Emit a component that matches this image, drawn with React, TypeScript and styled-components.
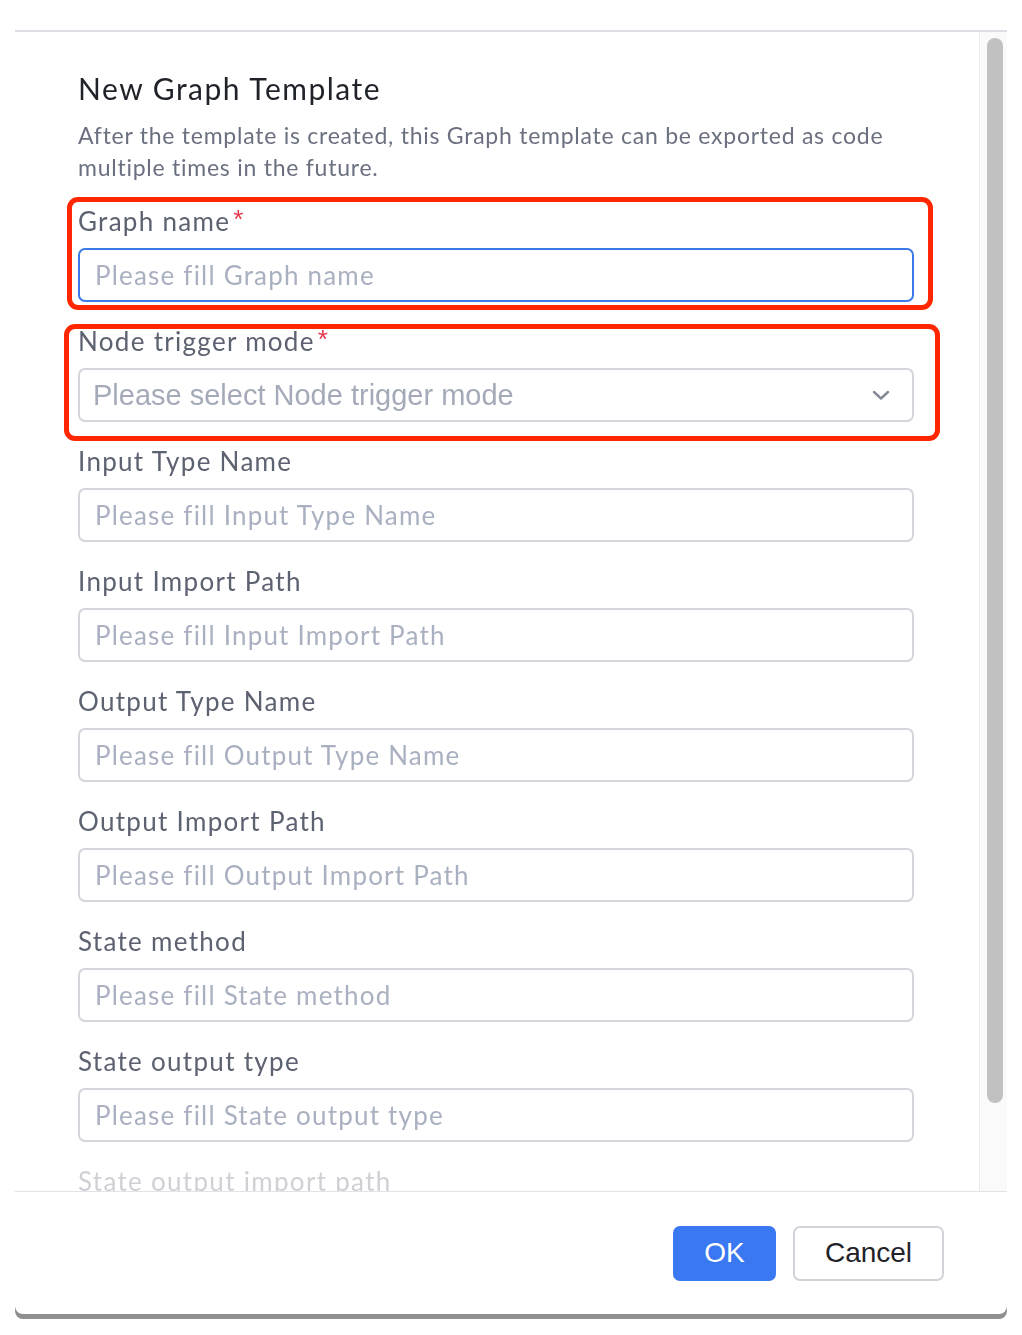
import React from "react";
import styled, { createGlobalStyle } from "styled-components";

const GlobalStyle = createGlobalStyle`
  html, body { margin: 0; padding: 0; background: #ffffff; }
  body { font-family: Lato, "Noto Sans", sans-serif; }
  * { box-sizing: border-box; }
`;

const Page = styled.div`
  width: 1022px;
  height: 1335px;
  padding: 30px 15px 0 15px;
  background: #ffffff;
`;

const Dialog = styled.div`
  width: 992px;
  background: #ffffff;
  border-top: 2px solid #dedee4;
  border-radius: 0 0 8px 8px;
  box-shadow: 0 5px 0 #8f8f8f;
  display: flex;
  flex-direction: column;
`;

const Body = styled.div`
  display: flex;
  height: 1160px;
  border-bottom: 1px solid #e2e2e8;
`;

const Content = styled.div`
  flex: 1;
  overflow: hidden;
  padding: 36px 65px 0 63px;
  -webkit-mask-image: linear-gradient(to bottom, #000 calc(100% - 34px), rgba(0,0,0,0.3) calc(100% - 22px), rgba(0,0,0,0.3) 100%);
  mask-image: linear-gradient(to bottom, #000 calc(100% - 34px), rgba(0,0,0,0.3) calc(100% - 22px), rgba(0,0,0,0.3) 100%);
`;

const ScrollTrack = styled.div`
  width: 28px;
  flex: none;
  background: #fafafa;
  border-left: 1px solid #ebebeb;
  padding: 6px 4px 0 7px;
`;

const ScrollThumb = styled.div`
  height: 1065px;
  background: #c1c1c1;
  border-radius: 8px;
`;

const Title = styled.h2`
  margin: 0;
  font-family: Lato, sans-serif;
  font-weight: 400;
  font-size: 30px;
  line-height: 40px;
  letter-spacing: 1.5px;
  color: #1f2329;
`;

const Description = styled.p`
  margin: 11px 0 23px 0;
  font-family: Lato, sans-serif;
  font-size: 23px;
  line-height: 32px;
  letter-spacing: 0.75px;
  color: #6b7080;
`;

const Field = styled.div`
  position: relative;
  margin-bottom: 24px;
`;

const Label = styled.label`
  display: flex;
  align-items: flex-start;
  height: 30px;
  margin-bottom: 12px;
  font-family: Lato, sans-serif;
  font-size: 26px;
  line-height: 30px;
  letter-spacing: 1.3px;
  color: #5d6271;
`;

const Required = styled.span`
  color: #e5364a;
  font-family: "Liberation Sans", Arial, sans-serif;
  font-size: 26px;
  line-height: 26px;
  letter-spacing: 0;
  margin-left: 3px;
`;

const TextInput = styled.input<{ $focused?: boolean }>`
  display: block;
  width: 100%;
  height: 54px;
  margin: 0;
  padding: 0 15px;
  border: 2px solid ${(p) => (p.$focused ? "#3c7ae9" : "#d5d6dc")};
  border-radius: 7px;
  background: #ffffff;
  font-family: Lato, sans-serif;
  font-size: 26px;
  letter-spacing: 1.2px;
  color: #1f2329;
  outline: none;
  &::placeholder { color: #a9b0c0; }
`;

const Select = styled.div`
  display: flex;
  align-items: center;
  justify-content: space-between;
  height: 54px;
  padding: 0 22px 0 13px;
  border: 2px solid #d5d6dc;
  border-radius: 7px;
  background: #ffffff;
`;

const SelectPlaceholder = styled.span`
  font-family: "Liberation Sans", Arial, sans-serif;
  font-size: 29px;
  color: #a4aab8;
`;

const Highlight = styled.div<{ $t: number; $l: number; $r: number; $b: number }>`
  position: absolute;
  top: ${(p) => p.$t}px;
  left: ${(p) => p.$l}px;
  right: ${(p) => p.$r}px;
  bottom: ${(p) => p.$b}px;
  border: 5px solid #ff2600;
  border-radius: 11px;
  pointer-events: none;
`;

const Footer = styled.div`
  height: 122px;
  display: flex;
  align-items: center;
  justify-content: flex-end;
  gap: 17px;
  padding: 0 63px 0 0;
`;

const Button = styled.button<{ $primary?: boolean }>`
  height: 55px;
  width: ${(p) => (p.$primary ? "103px" : "151px")};
  padding: 0;
  border-radius: 7px;
  border: 2px solid ${(p) => (p.$primary ? "#3a78f2" : "#d2d3d9")};
  background: ${(p) => (p.$primary ? "#3a78f2" : "#ffffff")};
  color: ${(p) => (p.$primary ? "#ffffff" : "#1f2329")};
  font-family: "Liberation Sans", Arial, sans-serif;
  font-size: 28px;
  cursor: pointer;
`;

const Chevron = () => (
  <svg width="18" height="12" viewBox="0 0 18 12" fill="none">
    <path d="M2 3 L9 9.5 L16 3" stroke="#858996" strokeWidth="2.4" strokeLinecap="round" strokeLinejoin="round" />
  </svg>
);

const plainFields = [
  "Input Type Name",
  "Input Import Path",
  "Output Type Name",
  "Output Import Path",
  "State method",
  "State output type",
  "State output import path",
];

export default function App() {
  return (
    <>
      <GlobalStyle />
      <Page>
        <Dialog>
          <Body>
            <Content>
              <Title>New Graph Template</Title>
              <Description>
                After the template is created, this Graph template can be exported as code multiple times in the future.
              </Description>

              <Field>
                <Label>
                  Graph name<Required>*</Required>
                </Label>
                <TextInput $focused placeholder="Please fill Graph name" />
                <Highlight $t={-9} $l={-11} $r={-19} $b={-8} />
              </Field>

              <Field>
                <Label>
                  Node trigger mode<Required>*</Required>
                </Label>
                <Select role="combobox">
                  <SelectPlaceholder>Please select Node trigger mode</SelectPlaceholder>
                  <Chevron />
                </Select>
                <Highlight $t={-2} $l={-14} $r={-26} $b={-19} />
              </Field>

              {plainFields.map((name) => (
                <Field key={name}>
                  <Label>{name}</Label>
                  <TextInput placeholder={`Please fill ${name}`} />
                </Field>
              ))}
            </Content>
            <ScrollTrack>
              <ScrollThumb />
            </ScrollTrack>
          </Body>
          <Footer>
            <Button $primary>OK</Button>
            <Button>Cancel</Button>
          </Footer>
        </Dialog>
      </Page>
    </>
  );
}
